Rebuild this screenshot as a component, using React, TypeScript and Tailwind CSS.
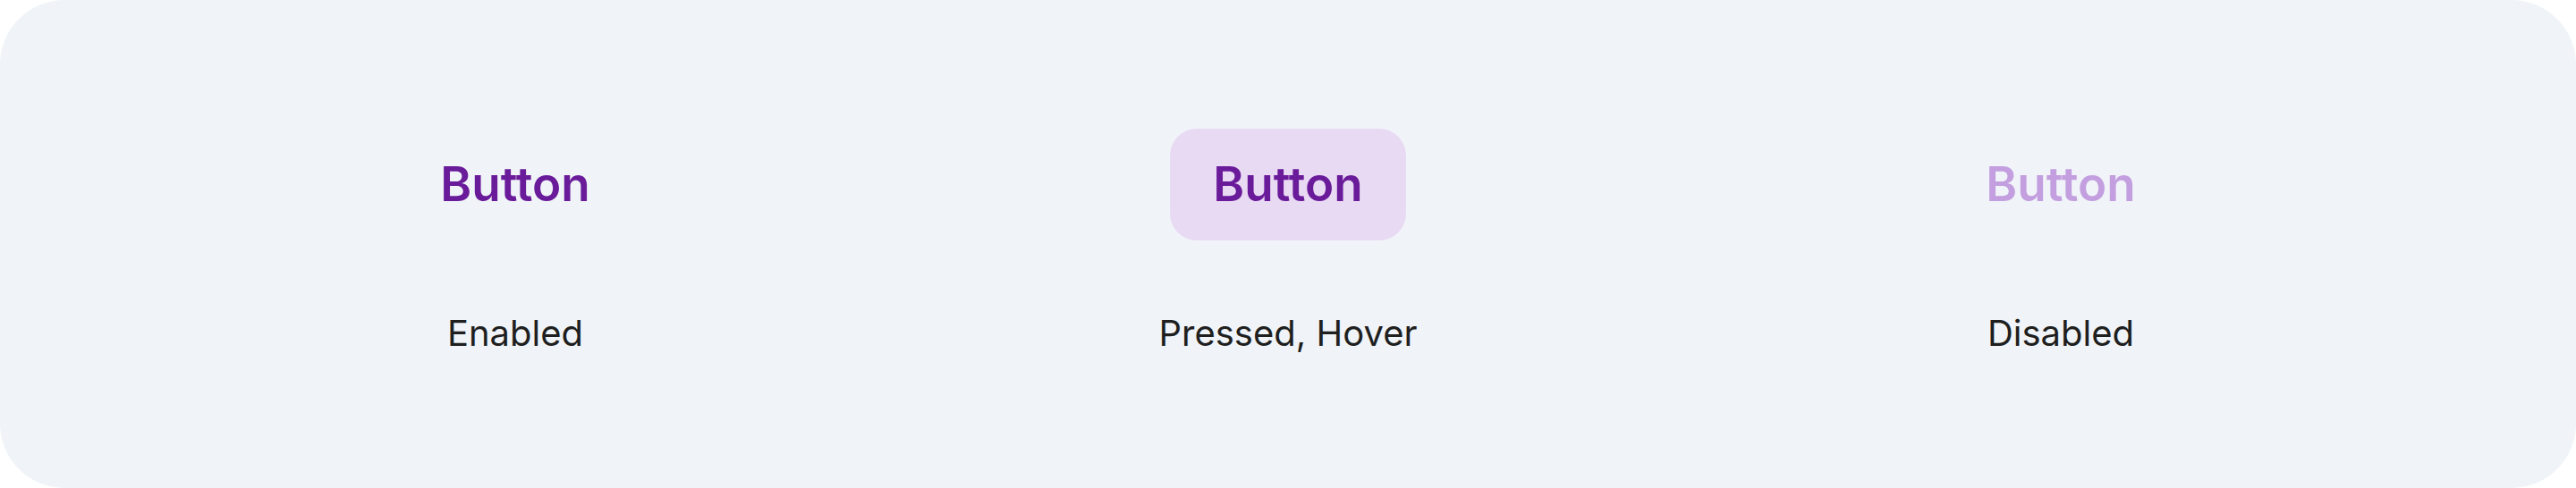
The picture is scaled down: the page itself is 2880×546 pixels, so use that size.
import React from "react";

function Column({ children, label }: { children: React.ReactNode; label: string }) {
  return (
    <div className="flex flex-col items-center">
      {children}
      <div className="mt-[80px] text-[40px] leading-[48px] text-[#1f1f1f]">{label}</div>
    </div>
  );
}

export default function App() {
  return (
    <div className="w-[2880px] h-[546px] bg-white" style={{ fontFamily: "Inter, 'Noto Sans', sans-serif" }}>
      <div className="w-full h-full rounded-[72px] bg-[#f0f4f8] px-[144px] pt-[144px] grid grid-cols-3">
        <Column label="Enabled">
          <div className="h-[125px] w-[264px] flex items-center justify-center text-[53px] font-semibold text-[#6a1b9a]">Button</div>
        </Column>
        <Column label="Pressed, Hover">
          <div className="h-[125px] w-[264px] flex items-center justify-center rounded-[30px] bg-[#e9daf3] text-[53px] font-semibold text-[#6a1b9a]">Button</div>
        </Column>
        <Column label="Disabled">
          <div className="h-[125px] w-[264px] flex items-center justify-center text-[53px] font-semibold text-[#c39fe0]">Button</div>
        </Column>
      </div>
    </div>
  );
}
